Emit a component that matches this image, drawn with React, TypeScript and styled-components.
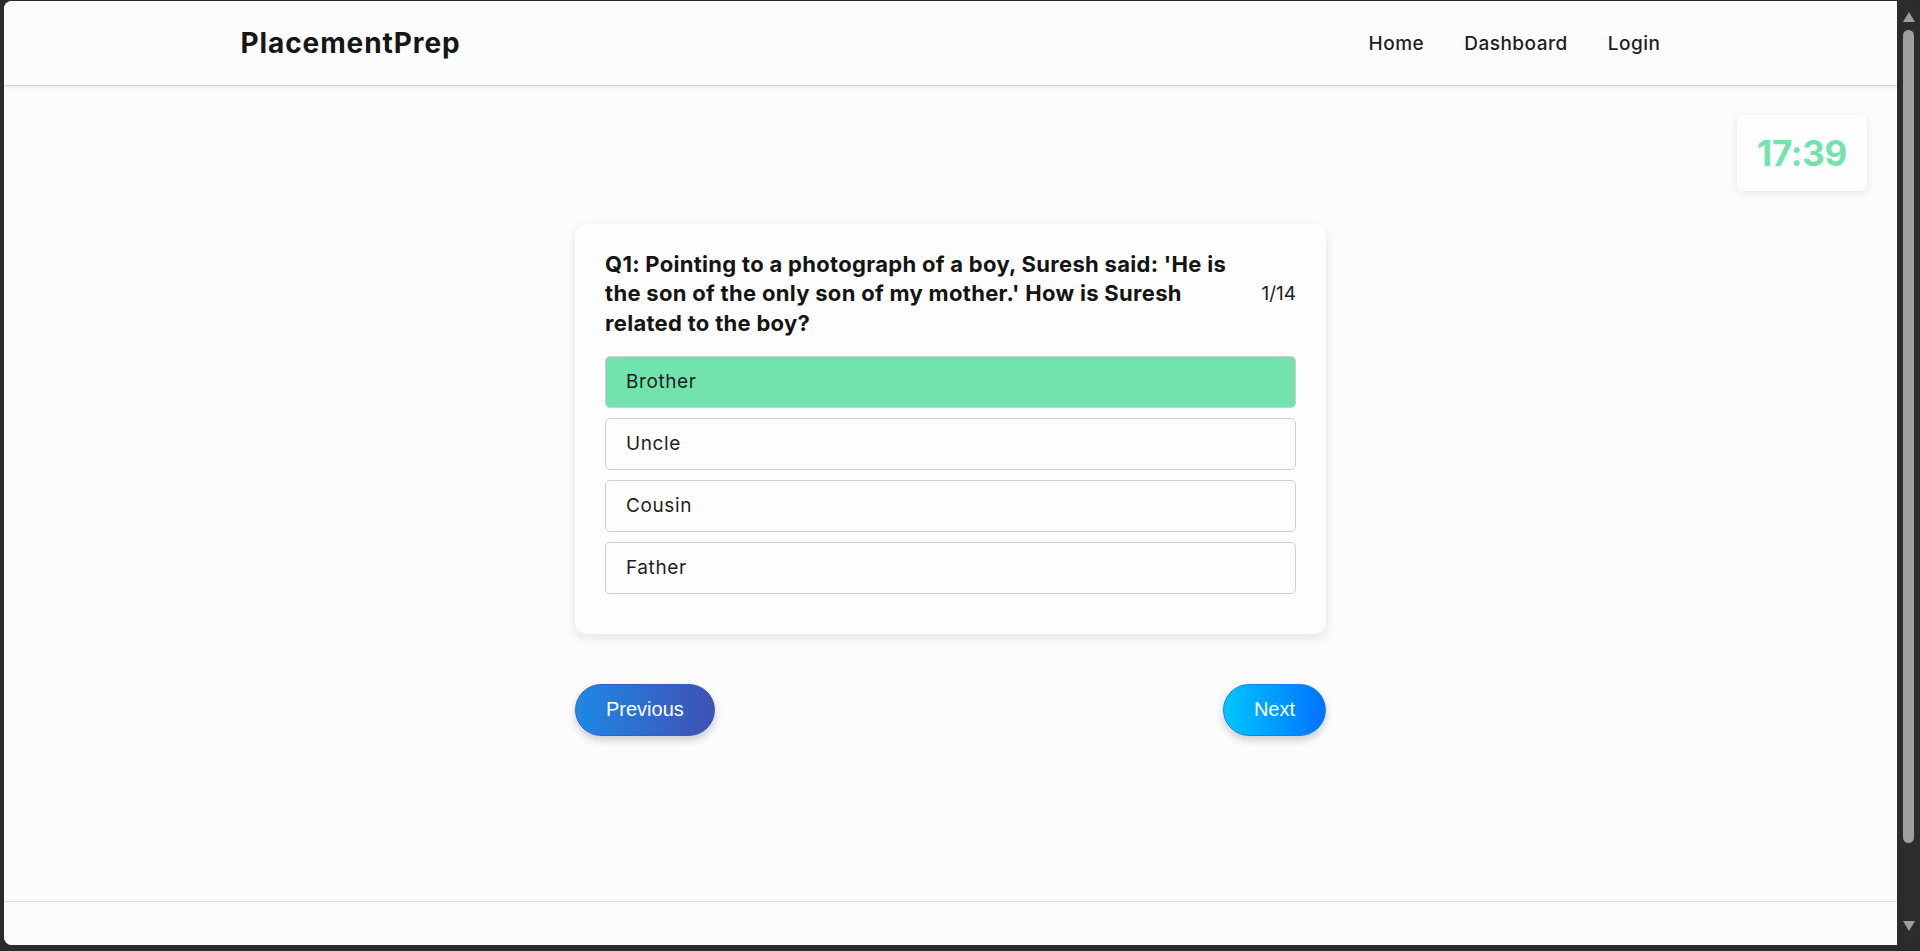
import React from "react";
import styled, { createGlobalStyle } from "styled-components";

const GlobalStyle = createGlobalStyle`
  * { box-sizing: border-box; }
  html, body { margin: 0; padding: 0; height: 100%; overflow: hidden; }
  body { font-family: Inter, Lato, sans-serif; color: #1c1c1c; background: #2b2b2b; }
`;

const Frame = styled.div`
  display: flex;
  height: 951px;
  padding: 1px 0 6px 4px;
  background: #2b2b2b;
`;

const Viewport = styled.div`
  flex: 1;
  display: flex;
  flex-direction: column;
  background: #fcfcfc;
  border-radius: 8px 0 0 8px;
  overflow: hidden;
  position: relative;
`;

const ScrollBar = styled.div`
  width: 23px;
  display: flex;
  flex-direction: column;
  align-items: center;
  padding: 11px 0 14px;
  background: #2c2c2c;
  border-radius: 0 8px 8px 0;
`;

const Arrow = styled.div<{ $down?: boolean }>`
  width: 0;
  height: 0;
  border-left: 6px solid transparent;
  border-right: 6px solid transparent;
  ${(p) => (p.$down ? "border-top: 10px solid #9d9d9d;" : "border-bottom: 10px solid #9d9d9d;")}
`;

const Thumb = styled.div`
  width: 11px;
  height: 813px;
  margin-top: 8px;
  background: #9f9f9f;
  border-radius: 6px;
`;

const Spacer = styled.div`
  flex: 1;
`;

const Header = styled.header`
  height: 85px;
  flex-shrink: 0;
  border-bottom: 1px solid #d8d8d8;
  box-shadow: 0 1px 3px rgba(0, 0, 0, 0.08);
  background: #fcfcfc;
`;

const HeaderInner = styled.div`
  max-width: 1420px;
  height: 100%;
  margin: 0 auto;
  display: flex;
  align-items: center;
  justify-content: space-between;
`;

const Logo = styled.div`
  font-size: 28px;
  font-weight: 700;
  color: #161616;
  letter-spacing: 0.9px;
`;

const Nav = styled.nav`
  display: flex;
  gap: 40px;
`;

const NavLink = styled.a`
  font-size: 19px;
  font-weight: 500;
  letter-spacing: 0.5px;
  color: #1e1e1e;
  text-decoration: none;
`;

const Main = styled.main`
  flex: 1;
  position: relative;
  display: flex;
  flex-direction: column;
  align-items: center;
  padding-top: 138px;
`;

const Timer = styled.div`
  position: absolute;
  top: 29px;
  right: 30px;
  width: 130px;
  height: 76px;
  display: flex;
  align-items: center;
  justify-content: center;
  background: #fdfdfd;
  border-radius: 6px;
  box-shadow: 0 2px 8px rgba(0, 0, 0, 0.1);
  font-size: 35px;
  font-weight: 700;
  letter-spacing: -0.3px;
  color: #72e3ad;
`;

const Quiz = styled.div`
  width: 751px;
`;

const Card = styled.div`
  background: #fdfdfd;
  border-radius: 12px;
  box-shadow: 0 4px 12px rgba(0, 0, 0, 0.1);
  padding: 26px 30px 30px;
`;

const QuestionRow = styled.div`
  display: flex;
  align-items: center;
  gap: 22px;
  margin-bottom: 18px;
`;

const Question = styled.h3`
  flex: 1;
  margin: 0;
  font-size: 22px;
  line-height: 29.3px;
  font-weight: 700;
  letter-spacing: 0.3px;
  color: #141414;
`;

const Counter = styled.span`
  font-size: 19px;
  color: #222;
`;

const Option = styled.div<{ $selected?: boolean }>`
  padding: 15px 20px;
  line-height: 20px;
  font-size: 19px;
  letter-spacing: 0.6px;
  color: #1e1e1e;
  border: 1px solid #cfcfcf;
  border-radius: 5px;
  margin-bottom: 10px;
  background: ${(p) => (p.$selected ? "#72e3ad" : "#fdfdfd")};
`;

const ButtonRow = styled.div`
  display: flex;
  justify-content: space-between;
  margin-top: 50px;
`;

const NavButton = styled.button<{ $variant: "prev" | "next" }>`
  font-family: "Liberation Sans", Arial, sans-serif;
  font-size: 20px;
  color: #fff;
  height: 52px;
  padding: 0 30px;
  border-radius: 26px;
  border: 1px solid ${(p) => (p.$variant === "prev" ? "#3a5bc0" : "#1a7af0")};
  background: ${(p) =>
    p.$variant === "prev"
      ? "linear-gradient(90deg, #1e88e5, #3f51b5)"
      : "linear-gradient(90deg, #00c6ff, #0072ff)"};
  box-shadow: 0 4px 8px rgba(0, 0, 0, 0.2);
  cursor: pointer;
`;

const Footer = styled.footer`
  height: 44px;
  flex-shrink: 0;
  border-top: 1px solid #dedede;
  background: #fcfcfc;
`;

const options = ["Brother", "Uncle", "Cousin", "Father"];

export default function App() {
  return (
    <>
      <GlobalStyle />
      <Frame>
        <Viewport>
          <Header>
            <HeaderInner>
              <Logo>PlacementPrep</Logo>
              <Nav>
                <NavLink>Home</NavLink>
                <NavLink>Dashboard</NavLink>
                <NavLink>Login</NavLink>
              </Nav>
            </HeaderInner>
          </Header>
          <Main>
            <Timer>17:39</Timer>
            <Quiz>
              <Card>
                <QuestionRow>
                  <Question>
                    Q1: Pointing to a photograph of a boy, Suresh said: 'He is the son of the only son of my
                    mother.' How is Suresh related to the boy?
                  </Question>
                  <Counter>1/14</Counter>
                </QuestionRow>
                {options.map((o, i) => (
                  <Option key={o} $selected={i === 0}>
                    {o}
                  </Option>
                ))}
              </Card>
              <ButtonRow>
                <NavButton $variant="prev">Previous</NavButton>
                <NavButton $variant="next">Next</NavButton>
              </ButtonRow>
            </Quiz>
          </Main>
          <Footer />
        </Viewport>
        <ScrollBar>
          <Arrow />
          <Thumb />
          <Spacer />
          <Arrow $down />
        </ScrollBar>
      </Frame>
    </>
  );
}
